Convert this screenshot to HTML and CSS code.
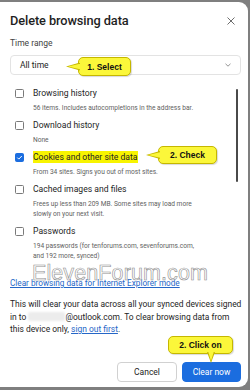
FILE: index.html
```html
<!DOCTYPE html>
<html>
<head>
<meta charset="utf-8">
<link rel="stylesheet" href="styles.css">
</head>
<body>
<div class="dialog">
  <div class="header">
    <h1 class="title">Delete browsing data</h1>
    <svg class="close" width="8" height="8" viewBox="0 0 8 8"><path d="M0.5 0.5 L7.5 7.5 M7.5 0.5 L0.5 7.5" stroke="#5c5c5c" stroke-width="0.9" fill="none"/></svg>
  </div>
  <div class="range-label">Time range</div>
  <div class="select">
    <span class="select-value">All time</span>
    <svg class="chevron" width="6" height="4" viewBox="0 0 6 4"><path d="M0.5 0.8 L3 3.2 L5.5 0.8" stroke="#777" stroke-width="0.8" fill="none"/></svg>
    <div class="callout callout-left c1">1. Select</div>
  </div>
  <div class="list">
    <div class="scrollbar"></div>
    <div class="item">
      <div class="row"><span class="box"></span><span class="label">Browsing history</span></div>
      <div class="sub">56 items. Includes autocompletions in the address bar.</div>
    </div>
    <div class="item">
      <div class="row"><span class="box"></span><span class="label">Download history</span></div>
      <div class="sub">None</div>
    </div>
    <div class="item">
      <div class="row"><span class="box checked"><svg width="9" height="9" viewBox="0 0 9 9"><path d="M2.3 4.6 L3.8 6.1 L6.8 3" stroke="#fff" stroke-width="1" fill="none"/></svg></span><span class="label hl">Cookies and other site data</span></div>
      <div class="sub">From 34 sites. Signs you out of most sites.</div>
      <div class="callout callout-left c2">2. Check</div>
    </div>
    <div class="item">
      <div class="row"><span class="box"></span><span class="label">Cached images and files</span></div>
      <div class="sub">Frees up less than 209 MB. Some sites may load more<br>slowly on your next visit.</div>
    </div>
    <div class="item">
      <div class="row"><span class="box"></span><span class="label">Passwords</span></div>
      <div class="sub">194 passwords (for tenforums.com, sevenforums.com,<br>and 192 more, synced)</div>
    </div>
    <div class="item">
      <div class="row"><span class="box"></span></div>
    </div>
  </div>
  <a class="ie-link" href="#">Clear browsing data for Internet Explorer mode</a>
  <p class="note">This will clear your data across all your synced devices signed in to <span class="blur"></span>@outlook.com. To clear browsing data from this device only, <a href="#" class="inline-link">sign out first</a>.</p>
  <div class="actions">
    <button class="btn cancel">Cancel</button>
    <button class="btn primary">Clear now</button>
    <div class="callout callout-down c3">2. Click on</div>
  </div>
  <div class="watermark">ElevenForum.com</div>
</div>
</body>
</html>
```

FILE: styles.css
```css
* { box-sizing: border-box; }
html, body { margin: 0; padding: 0; }
body {
  width: 250px;
  height: 390px;
  background: #7f7f7f;
  font-family: Roboto, "Noto Sans", "Liberation Sans", sans-serif;
  color: #242424;
  overflow: hidden;
}
.dialog {
  position: relative;
  margin-top: 2px;
  width: 248px;
  height: 385px;
  background: #fff;
  border-radius: 0 9px 9px 0;
  padding: 11px 7px 0 10px;
  display: flex;
  flex-direction: column;
}
.header {
  display: flex;
  align-items: center;
  justify-content: space-between;
  height: 16px;
  padding-right: 6px;
}
.title {
  margin: 0;
  font-size: 12.8px;
  font-weight: 500;
  color: #1f1f1f;
  line-height: 16px;
  letter-spacing: -0.1px;
}
.close { display: block; }
.range-label {
  margin-top: 8px;
  font-size: 8.5px;
  line-height: 12px;
  color: #424242;
}
.select {
  position: relative;
  margin-top: 6px;
  height: 20px;
  border: 1px solid #e3e3e3;
  border-radius: 4px;
  display: flex;
  align-items: center;
  justify-content: space-between;
  padding: 0 9px 0 9px;
}
.select-value { font-size: 8.5px; color: #242424; }
.chevron { display: block; }
.list {
  position: relative;
  height: 193px;
  overflow: hidden;
  padding: 12px 0 0 5px;
  display: flex;
  flex-direction: column;
  gap: 6px;
}
.scrollbar {
  position: absolute;
  left: 226px;
  top: 14px;
  width: 2px;
  height: 93px;
  background: #4a4a4a;
  border-radius: 1px;
}
.item { position: relative; }
.row {
  display: flex;
  align-items: center;
  gap: 9px;
  height: 12px;
}
.box {
  width: 9px;
  height: 9px;
  border: 1px solid #7a7a7a;
  border-radius: 1.5px;
  flex: none;
  display: flex;
}
.box.checked { background: #1b6ddf; border-color: #1b6ddf; }
.box svg { display: block; margin: -1px; }
.label {
  font-size: 8.6px;
  line-height: 12px;
  color: #242424;
}
.label.hl { background: #f8f400; padding-right: 1px; }
.sub {
  margin-top: 4px;
  padding-left: 18px;
  font-size: 6.6px;
  line-height: 10px;
  color: #616161;
}
.watermark {
  position: absolute;
  left: 32px;
  top: 258px;
  font-family: "Liberation Sans", sans-serif;
  font-size: 21.5px;
  line-height: 26px;
  color: rgba(255,255,255,0.6);
  -webkit-text-stroke: 0.6px #8f8f8f;
  letter-spacing: 0.1px;
  pointer-events: none;
}
.ie-link {
  margin-top: 9px;
  font-size: 8.2px;
  line-height: 12px;
  color: #2566c7;
  text-decoration: underline;
}
.note {
  margin: 9px 0 0 0;
  font-size: 8.45px;
  line-height: 12.5px;
  color: #242424;
  padding-right: 0;
  margin-right: -1px;
}
.blur {
  display: inline-block;
  width: 37px;
  height: 9px;
  vertical-align: -1px;
  background: #ececec;
  border-radius: 2px;
  filter: blur(0.8px);
}
.inline-link { color: #2566c7; text-decoration: underline; }
.actions {
  position: relative;
  margin-top: auto;
  margin-bottom: 5px;
  display: flex;
  justify-content: flex-end;
  gap: 5px;
}
.btn {
  height: 20px;
  border-radius: 4px;
  font-family: inherit;
  font-size: 8.5px;
  padding: 0;
  cursor: pointer;
}
.cancel {
  width: 60px;
  background: #fff;
  border: 1px solid #d1d1d1;
  color: #242424;
}
.primary {
  width: 59px;
  background: #1b6ddf;
  border: 1px solid #1b6ddf;
  color: #fff;
}
.callout {
  position: absolute;
  background: #fbf73a;
  border: 1px solid #c5b700;
  border-radius: 5px;
  font-family: "Liberation Sans", Arial, sans-serif;
  font-weight: bold;
  font-size: 8.5px;
  color: #111;
  display: flex;
  align-items: center;
  justify-content: center;
  box-shadow: 1px 1px 1px rgba(0,0,0,0.15);
}
.callout-left::before, .callout-left::after {
  content: "";
  position: absolute;
  top: 50%;
  clip-path: polygon(0 50%, 100% 0, 100% 100%);
}
.callout-left::before {
  left: -13px;
  width: 14px;
  height: 8px;
  margin-top: -4px;
  background: #c5b700;
}
.callout-left::after {
  left: -11px;
  width: 13px;
  height: 6px;
  margin-top: -3px;
  background: #fbf73a;
}
.callout-down::before, .callout-down::after {
  content: "";
  position: absolute;
  clip-path: polygon(0 0, 100% 0, 50% 100%);
}
.callout-down::before {
  left: 38px;
  bottom: -10px;
  width: 8px;
  height: 11px;
  background: #c5b700;
}
.callout-down::after {
  left: 39px;
  bottom: -8px;
  width: 6px;
  height: 10px;
  background: #fbf73a;
}
.c1 { left: 67px; top: 1px; width: 53px; height: 19px; }
.c2 { left: 143px; top: -5px; width: 59px; height: 18px; }
.c3 { left: 158px; top: -26px; width: 65px; height: 18px; }
```
